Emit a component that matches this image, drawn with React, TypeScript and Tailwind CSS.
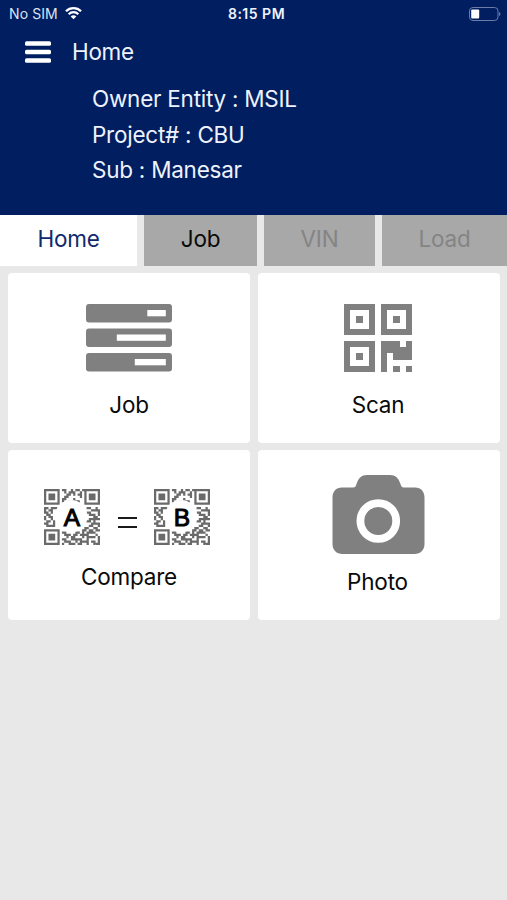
import type { ReactNode } from 'react';

const FONT = "font-['Inter','Liberation_Sans',sans-serif]";

// 25x25 module map, the centre is left free for the letter
const QR_ROWS = [
  '1111111011001011011111111',
  '1000001001011100101000001',
  '1011101000110101101011101',
  '1011101001100000101011101',
  '1011101011000100001011101',
  '1000001010011111001000001',
  '1111111000000010001111111',
  '0000000000000000000000000',
  '1101110000000000000110010',
  '1011000000000000000001111',
  '1101000000000000000110001',
  '0110000000000000000011101',
  '1011000000000000000000110',
  '1001000000000000000011111',
  '0110100000000000000110100',
  '1100100000000000000001111',
  '0111100000000000000011001',
  '0000000000000000001100110',
  '1111111000000000011011011',
  '1000001011000011010111100',
  '1011101001110110111100010',
  '1011101000101100010111101',
  '1011101011001111100100001',
  '1000001001110010111101101',
  '1111111010011101100100111',
];

const SCAN_ROWS = [
  '11111011111',
  '10001010001',
  '10101010101',
  '10001010001',
  '11111011111',
  '00000000000',
  '11111011101',
  '10001011111',
  '10101010111',
  '10001010000',
  '11111010101',
];

function rowsToPath(rows: string[]) {
  return rows
    .flatMap((row, y) => [...row].map((c, x) => (c === '1' ? `M${x} ${y}h1v1h-1z` : '')))
    .join('');
}

function WifiIcon() {
  return (
    <svg className="h-[13px] w-[17px]" viewBox="0 0 17 13" fill="none" stroke="#fff">
      <path d="M1 4.300a10.600 10.600 0 0 1 15 0" strokeWidth="2.3" />
      <path d="M3.700 7.200a6.700 6.700 0 0 1 9.600 0" strokeWidth="2.2" />
      <path d="M8.500 12.300 5.700 9.500a3.900 3.900 0 0 1 5.600 0z" fill="#fff" stroke="none" />
    </svg>
  );
}

function BatteryIcon() {
  return (
    <svg className="h-[14px] w-8" viewBox="0 0 32 14" fill="none">
      <rect x="0.5" y="0.5" width="28.5" height="13" rx="3.5" stroke="#6b7da6" />
      <rect x="2.2" y="2.6" width="8" height="9" rx="1" fill="#fff" />
      <path d="M30.2 5v4c1.6-.6 1.6-3.4 0-4z" fill="#8090b3" />
    </svg>
  );
}

function MenuIcon() {
  return (
    <svg className="h-[22px] w-[26px]" viewBox="0 0 26 22" fill="#fff">
      <rect y="0.3" width="26" height="4.5" rx="1.5" />
      <rect y="8.8" width="26" height="4.5" rx="1.5" />
      <rect y="17.2" width="26" height="4.5" rx="1.5" />
    </svg>
  );
}

function JobIcon() {
  return (
    <svg className="h-[68px] w-[86px]" viewBox="0 0 86 68" fill="#808080">
      <rect y="0" width="86" height="18.5" rx="3" />
      <rect y="24.5" width="86" height="18.5" rx="3" />
      <rect y="49" width="86" height="18.5" rx="3" />
      <g fill="#fff">
        <rect x="61.3" y="6" width="18.5" height="6.3" />
        <rect x="30.8" y="30.5" width="49" height="6.3" />
        <rect x="48.8" y="55" width="31" height="6.3" />
      </g>
    </svg>
  );
}

function ScanIcon() {
  return (
    <svg className="h-[68px] w-[68px]" viewBox="0 0 11 11" fill="#808080" shapeRendering="crispEdges">
      <path d={rowsToPath(SCAN_ROWS)} />
    </svg>
  );
}

function LetterCode({ letter }: { letter: string }) {
  return (
    <div className="relative h-14 w-14">
      <svg className="h-14 w-14" viewBox="0 0 25 25" fill="#6a6a6a">
        <path d={rowsToPath(QR_ROWS)} />
        <circle cx="12.1" cy="12.1" r="7.2" fill="#fff" />
      </svg>
      <span className="absolute inset-0 flex items-center justify-center pt-[2px] font-['Liberation_Sans',sans-serif] text-[24.5px] leading-none text-black [-webkit-text-stroke:1px_black]">
        {letter}
      </span>
    </div>
  );
}

function CameraIcon() {
  return (
    <svg className="h-20 w-[93px]" viewBox="0 0 93 80">
      <path
        d="M10 12.5h11c2.500 0 2.800-1.300 3.500-3.500C26.500 3 29.500 0 35 0h23c5.500 0 8.500 3 10.500 9 .7 2.200 1 3.500 3.500 3.500h11c6 0 9.500 4 9.500 10V69c0 6-4 10-10 10H10.500c-6 0-10-4-10-10V22.500c0-6 3.500-10 9.500-10z"
        fill="#808080"
      />
      <circle cx="46.3" cy="46" r="17.9" fill="none" stroke="#fff" strokeWidth="7.8" />
    </svg>
  );
}

function Card({ label, labelClass, children }: { label: string; labelClass: string; children: ReactNode }) {
  return (
    <button className="flex h-[170px] flex-col items-center rounded-[4px] bg-white">
      {children}
      <span className={`text-[22.5px] leading-7 tracking-[-0.2px] text-[#0a0a0a] ${labelClass}`}>{label}</span>
    </button>
  );
}

export default function App() {
  return (
    <div className={`flex h-[900px] w-[507px] flex-col overflow-hidden bg-[#e8e8e8] ${FONT}`}>
      <header className="h-[215px] bg-[#001e60] text-[#eef2fc]">
        <div className="grid h-[27px] grid-cols-3 items-center pr-[6px] pl-[9px] text-[14px]">
          <div className="flex items-center gap-[7px]">
            <span className="tracking-[0.1px] text-[#dbe2f2]">No SIM</span>
            <WifiIcon />
          </div>
          <span className="pl-[3px] text-center font-semibold tracking-[0.5px]">8:15 PM</span>
          <div className="flex justify-end">
            <BatteryIcon />
          </div>
        </div>
        <div className="flex h-[50px] items-center pl-[25px]">
          <button>
            <MenuIcon />
          </button>
          <h1 className="pl-[21px] text-[22.5px] leading-7 tracking-[-0.3px]">Home</h1>
        </div>
        <div className="pt-1 pl-[92px] text-[22.5px] leading-[35.5px] tracking-[-0.25px]">
          <p>Owner Entity : MSIL</p>
          <p>Project# : CBU</p>
          <p>Sub : Manesar</p>
        </div>
      </header>

      <nav className="grid h-[51px] grid-cols-[137px_113px_111px_125px] gap-[7px] text-[22.5px] leading-[48px] tracking-[-0.2px]">
        <button className="bg-white pb-[3px] text-[#0f2a6b]">Home</button>
        <button className="bg-[#a8a8a8] pb-[3px] text-[#0a0a0a]">Job</button>
        <button className="bg-[#a8a8a8] pb-[3px] text-[#848484]">VIN</button>
        <button className="bg-[#a8a8a8] pb-[3px] text-[#848484]">Load</button>
      </nav>

      <main className="grid grid-cols-2 gap-x-2 gap-y-[7px] pt-[7px] pr-[7px] pl-2">
        <Card label="Job" labelClass="mt-[19px]">
          <div className="mt-[30.500px]">
            <JobIcon />
          </div>
        </Card>
        <Card label="Scan" labelClass="mt-[19px] pr-[2px]">
          <div className="mt-[30.500px] pr-[2px]">
            <ScanIcon />
          </div>
        </Card>
        <Card label="Compare" labelClass="mt-[18px]">
          <div className="mt-[39px] flex pr-[4px]">
            <LetterCode letter="A" />
            <div className="mt-[28px] flex w-[54px] flex-col items-center gap-[7px] pl-[1px]">
              <span className="h-[2px] w-[19px] bg-[#1a1a1a]" />
              <span className="h-[2px] w-[19px] bg-[#1a1a1a]" />
            </div>
            <LetterCode letter="B" />
          </div>
        </Card>
        <Card label="Photo" labelClass="mt-[13px] pr-[3px]">
          <div className="mt-[25px] pr-[2px]">
            <CameraIcon />
          </div>
        </Card>
      </main>
    </div>
  );
}
